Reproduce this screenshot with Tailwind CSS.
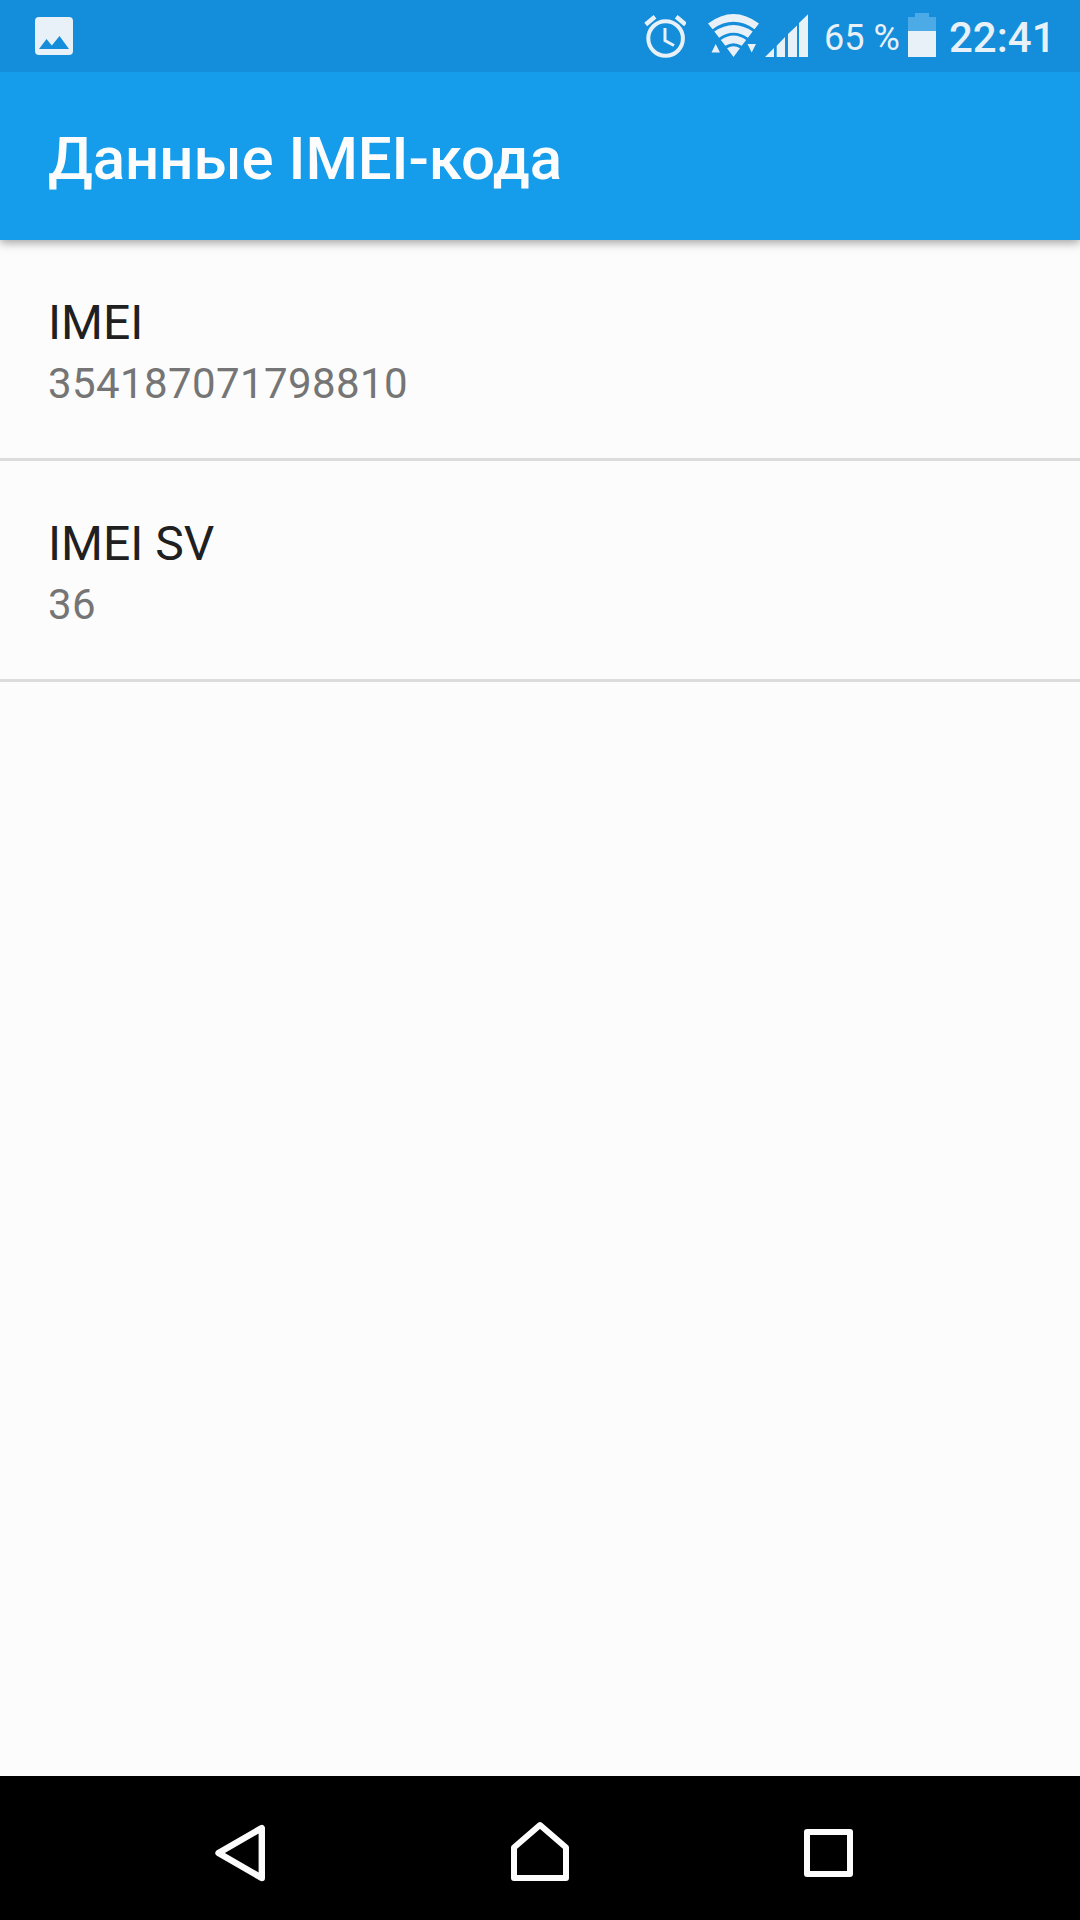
<!DOCTYPE html>
<html lang="ru">
<head>
<meta charset="utf-8">
<title>Данные IMEI-кода</title>
<script src="https://cdn.jsdelivr.net/npm/@tailwindcss/browser@4"></script>
</head>
<body class="w-[1080px] h-[1920px] overflow-hidden bg-[#fcfcfc] font-['Roboto',sans-serif] flex flex-col">
  <div class="relative z-10 h-[72px] shrink-0 bg-[#148dda] text-[#e8f0f8] flex">
    <svg class="w-[38px] h-[72px] ml-[35px]" viewBox="35 0 38 72" fill="currentColor"><path fill-rule="evenodd" d="M39 17H69Q73 17 73 21V51Q73 55 69 55H39Q35 55 35 51V21Q35 17 39 17ZM39 49H69L59.500 36L51.800 45.500L46.500 39Z"/></svg>
    <svg class="w-[42px] h-[72px] ml-auto" viewBox="644 0 42 72" fill="none" stroke="currentColor"><circle cx="665.600" cy="38.500" r="17.300" stroke-width="4"/><path d="M665 28V40.500L674 45.500" stroke-width="3"/><path d="M645.700 24.500L655 16.700M685.500 24.500L676.200 16.700" stroke-width="4.400"/></svg>
    <svg class="w-[52px] h-[72px] ml-[22px]" viewBox="708 0 52 72" fill="currentColor"><path d="M708 23.500Q733.500 4.500 759 23.500L754.500 29.200Q733.500 14.500 712.500 29.200Z"/><path d="M714.300 31.500Q733.500 18.500 752.700 31.500L747.900 37.700Q733.500 28 719.100 37.700Z"/><path d="M720.800 40Q733.500 31 746.200 40L741.700 45.800Q733.500 40.500 725.300 45.800Z"/><path d="M727 48.200Q733.500 44.500 740 48.200L733.500 57Z"/><path d="M711.500 52.500L715.700 44L720 52.500ZM747.500 44H756L751.700 52.500Z"/></svg>
    <svg class="w-[43px] h-[72px] ml-[5px]" viewBox="765 0 43 72" fill="currentColor"><path d="M765 57L774 48V57ZM776.700 57V45.700L785 37V57ZM788 57V34L797 25.500V57ZM799 57V23L808 14.300V57Z"/></svg>
    <div class="w-[84px] ml-[16px] pt-[17px] text-[36px] leading-[42px] whitespace-nowrap">65 %</div>
    <svg class="w-[28px] h-[72px]" viewBox="908 0 28 72"><path fill="#4caae6" d="M908 17H915V13H929V17H936V31H908Z"/><path fill="currentColor" d="M908 31H936V57H908Z"/></svg>
    <div class="w-[131px] ml-[13px] pt-[13px] text-[42px] leading-[50px] font-medium whitespace-nowrap">22:41</div>
  </div>
  <header class="h-[168px] shrink-0 bg-[#159dec] text-[#fcfcfc] pl-[48px] pt-[52px] text-[60px] leading-[70px] tracking-[-0.08px] font-medium whitespace-nowrap shadow-[0_3px_9px_rgba(0,0,0,0.35)]">Данные IMEI-кода</header>
  <main class="grow">
    <section class="h-[221px] border-b-3 border-[#dcdcdc] pl-12 pt-[55px] whitespace-nowrap">
      <div class="text-[48px] leading-[56px] text-[#202020]">IMEI</div>
      <div class="text-[42px] leading-[50px] pt-[8px] tracking-[0.4px] text-[#757575]">354187071798810</div>
    </section>
    <section class="h-[221px] border-b-3 border-[#dcdcdc] pl-12 pt-[55px] whitespace-nowrap">
      <div class="text-[48px] leading-[56px] text-[#202020]">IMEI SV</div>
      <div class="text-[42px] leading-[50px] pt-[8px] tracking-[0.4px] text-[#757575]">36</div>
    </section>
  </main>
  <nav class="h-[144px] shrink-0 bg-black text-[#fcfcfc] flex">
    <svg class="w-[54px] h-[144px] ml-[213px]" viewBox="213 1776 54 144" fill="none" stroke="currentColor" stroke-width="6.400" stroke-linejoin="round"><path d="M218.500 1853L261.800 1828V1878Z"/></svg>
    <svg class="w-[60px] h-[144px] ml-[243px]" viewBox="510 1776 60 144" fill="none" stroke="currentColor" stroke-width="6" stroke-linejoin="round"><path d="M514 1878V1847.500L540 1825L566 1847.500V1878Z"/></svg>
    <svg class="w-[52px] h-[144px] ml-[232px]" viewBox="802 1776 52 144" fill="none" stroke="currentColor" stroke-width="6" stroke-linejoin="round"><path d="M807 1832H850V1874H807Z"/></svg>
  </nav>
</body>
</html>
